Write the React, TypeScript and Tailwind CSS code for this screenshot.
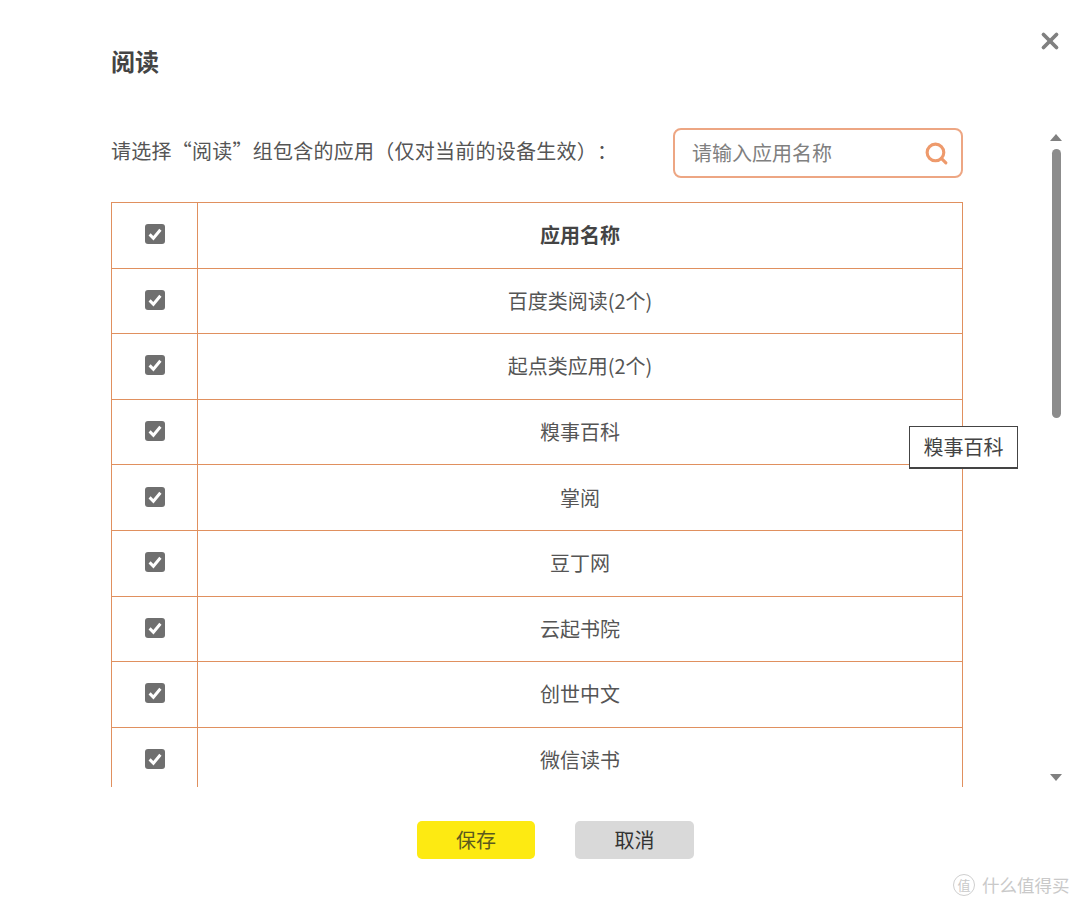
import { X, Search } from "lucide-react";

const apps = ["百度类阅读(2个)", "起点类应用(2个)", "糗事百科", "掌阅", "豆丁网", "云起书院", "创世中文", "微信读书"];

function CheckBox() {
  return (
    <span className="flex h-5 w-5 items-center justify-center rounded-[3px] bg-[#6f6f6f]">
      <svg viewBox="0 0 20 20" className="h-5 w-5" fill="none">
        <path d="M4.6 10.4 8.4 14.2 15.4 5.8" stroke="#fff" strokeWidth="3" />
      </svg>
    </span>
  );
}

function Row({ name, head }: { name: string; head?: boolean }) {
  return (
    <div className="flex h-[65.6px] shrink-0 border-b border-[#e0905f]">
      <div className="flex w-[86px] shrink-0 items-center justify-center border-r border-[#e0905f] pb-[2px]">
        <CheckBox />
      </div>
      <div className={`flex flex-1 items-center justify-center text-[20px] ${head ? "font-bold text-[#444]" : "text-[#555]"}`}>
        {name}
      </div>
    </div>
  );
}

export default function App() {
  return (
    <div
      className="relative h-[908px] w-[1080px] overflow-hidden bg-white pl-[111px] text-[#555]"
      style={{ fontFamily: '"Noto Sans CJK SC", "Liberation Sans", sans-serif' }}
    >
      <X className="absolute left-[1037px] top-[28px] h-[26px] w-[26px] text-[#808080]" strokeWidth={3.5} />

      <div className="h-[128px] w-[852px] pt-[43px] text-[24px] font-bold leading-[36px] text-[#444]">阅读</div>

      <div className="flex w-[852px] items-start justify-between">
        <div className="pt-[8px] text-[20px] leading-[30px] tracking-[0.25px] [text-spacing-trim:space-all]">请选择“阅读”组包含的应用（仅对当前的设备生效）：</div>
        <div className="flex h-[50px] w-[290px] items-center justify-between rounded-[8px] border-2 border-[#eda683] pl-[17px] pr-[12px]">
          <span className="text-[20px] text-[#808080]">请输入应用名称</span>
          <Search className="h-[25px] w-[25px] text-[#ee9a6c]" strokeWidth={3} />
        </div>
      </div>

      <div className="mt-[24px] flex h-[585px] w-[852px] flex-col overflow-hidden border-x border-t border-[#e0905f]">
        <Row name="应用名称" head />
        {apps.map((name) => (
          <Row key={name} name={name} />
        ))}
      </div>

      <div className="mt-[34px] flex w-[852px] gap-[40px] pl-[306px] text-[20px]">
        <button className="h-[38px] w-[118px] rounded-[5px] bg-[#fdea12] text-[#5c5a1e]">保存</button>
        <button className="h-[38px] w-[119px] rounded-[5px] bg-[#d9d9d9] text-[#333]">取消</button>
      </div>

      {/* scrollbar */}
      <div className="absolute left-[1050px] top-[134px] h-0 w-0 border-x-[6px] border-b-[7px] border-x-transparent border-b-[#808080]" />
      <div className="absolute left-[1052px] top-[149px] h-[269px] w-[9px] rounded-full bg-[#8c8c8c]" />
      <div className="absolute left-[1050px] top-[774px] h-0 w-0 border-x-[6px] border-t-[7px] border-x-transparent border-t-[#808080]" />

      {/* tooltip */}
      <div className="absolute left-[909px] top-[426px] flex h-[43px] w-[109px] items-center justify-center border border-b-2 border-[#444] bg-white text-[20px] text-[#444]">
        糗事百科
      </div>

      {/* watermark */}
      <div className="absolute left-[953px] top-[873px] flex items-center gap-[7px] text-[#c9c9c9]">
        <span className="flex h-[22px] w-[22px] items-center justify-center rounded-full border border-[#cfcfcf] text-[13px]">值</span>
        <span className="text-[17.5px] leading-[24px]">什么值得买</span>
      </div>
    </div>
  );
}
